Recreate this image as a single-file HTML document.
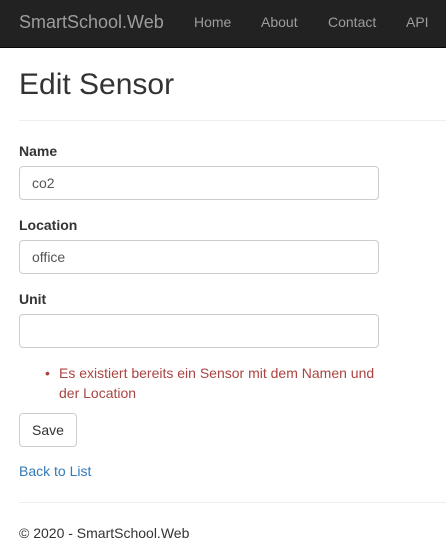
<!DOCTYPE html>
<html><head><style>
body{margin:0;width:446px;height:551px;overflow:hidden;background:#fff;font-family:"Liberation Sans",Arial,sans-serif;font-size:14px;color:#333;position:relative}
.nav{position:absolute;left:0;top:0;width:446px;height:47px;background:#222;border-bottom:1px solid #080808}
.nav span{position:absolute;top:0;line-height:45px;color:#9d9d9d;font-size:14px}
.a{position:absolute;white-space:nowrap}
.inp{position:absolute;left:19px;width:358px;height:32px;border:1px solid #ccc;border-radius:4px;background:#fff}
.inp span{position:absolute;left:12px;top:0;line-height:32px;color:#555}
label{font-weight:bold}
</style></head><body>
<div class="nav">
<span style="left:19px;font-size:18px">SmartSchool.Web</span>
<span style="left:194px">Home</span>
<span style="left:261px">About</span>
<span style="left:328px">Contact</span>
<span style="left:406px">API</span>
</div>
<div class="a" style="left:19px;top:66px;font-size:30px;line-height:38px;color:#333">Edit Sensor</div>
<div class="a" style="left:19px;top:120px;width:427px;border-top:1px solid #eee"></div>
<label class="a" style="left:19px;top:143px">Name</label>
<div class="inp" style="top:166px"><span>co2</span></div>
<label class="a" style="left:19px;top:217px">Location</label>
<div class="inp" style="top:240px"><span>office</span></div>
<label class="a" style="left:19px;top:291px">Unit</label>
<div class="inp" style="top:314px"></div>
<div class="a" style="left:45px;top:363px;line-height:20px;color:#a94442">•</div>
<div class="a" style="left:59px;top:363px;line-height:20px;color:#a94442">Es existiert bereits ein Sensor mit dem Namen und<br>der Location</div>
<div class="a" style="left:19px;top:413px;width:56px;height:32px;border:1px solid #ccc;border-radius:4px;line-height:32px;text-align:center;color:#333">Save</div>
<div class="a" style="left:19px;top:463px;color:#337ab7">Back to List</div>
<div class="a" style="left:19px;top:502px;width:427px;border-top:1px solid #eee"></div>
<div class="a" style="left:19px;top:525px">© 2020 - SmartSchool.Web</div>
</body></html>
